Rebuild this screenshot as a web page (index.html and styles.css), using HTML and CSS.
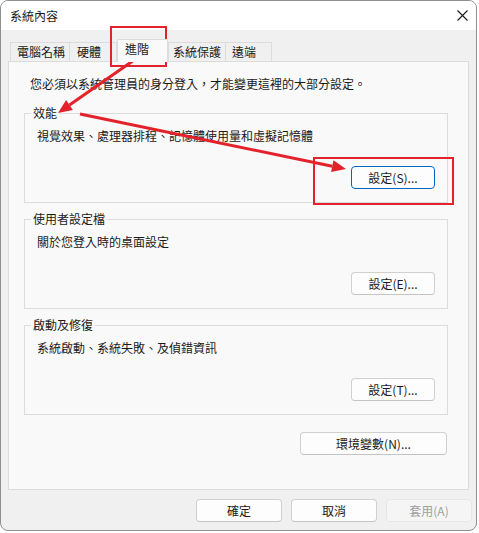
FILE: index.html
```html
<!DOCTYPE html>
<html lang="zh-TW">
<head>
    <meta charset="UTF-8">
    <title>系統內容</title>
    <link rel="stylesheet" href="styles.css">
</head>
<body>
    <div class="screen">
        <div class="window">
            <div class="titlebar">
                <span class="title">系統內容</span>
                <svg class="close" width="11" height="11" viewBox="0 0 11 11">
                    <path d="M0.5 0.5 L10.5 10.5 M10.5 0.5 L0.5 10.5" stroke="#1a1a1a" stroke-width="1.1" fill="none"/>
                </svg>
            </div>

            <div class="tabs">
                <div class="tab tab-computer">電腦名稱</div>
                <div class="tab tab-hardware">硬體</div>
                <div class="tab tab-advanced selected">進階</div>
                <div class="tab tab-protect">系統保護</div>
                <div class="tab tab-remote">遠端</div>
            </div>

            <div class="panel">
                <p class="notice">您必須以系統管理員的身分登入，才能變更這裡的大部分設定。</p>

                <fieldset class="group">
                    <legend>效能</legend>
                    <p class="desc">視覺效果、處理器排程、記憶體使用量和虛擬記憶體</p>
                    <div class="group-actions">
                        <button class="btn default">設定(S)...</button>
                    </div>
                </fieldset>

                <fieldset class="group">
                    <legend>使用者設定檔</legend>
                    <p class="desc">關於您登入時的桌面設定</p>
                    <div class="group-actions">
                        <button class="btn">設定(E)...</button>
                    </div>
                </fieldset>

                <fieldset class="group">
                    <legend>啟動及修復</legend>
                    <p class="desc">系統啟動、系統失敗、及偵錯資訊</p>
                    <div class="group-actions">
                        <button class="btn">設定(T)...</button>
                    </div>
                </fieldset>

                <div class="env-row">
                    <button class="btn wide">環境變數(N)...</button>
                </div>
            </div>

            <div class="footer">
                <button class="btn footer-btn">確定</button>
                <button class="btn footer-btn">取消</button>
                <button class="btn footer-btn" disabled>套用(A)</button>
            </div>
        </div>

        <!-- 標註 -->
        <svg class="marks" width="479" height="533" viewBox="0 0 479 533">
            <rect x="111" y="27" width="55" height="39" fill="none" stroke="#e3222b" stroke-width="2"/>
            <rect x="314" y="158" width="139" height="46" fill="none" stroke="#e3222b" stroke-width="2"/>
            <line x1="137" y1="58" x2="69.5" y2="105" stroke="#e3222b" stroke-width="3"/>
            <polygon points="58,113 72.9,109.9 66.1,100.1" fill="#e3222b"/>
            <line x1="80" y1="114" x2="332.3" y2="166.2" stroke="#e3222b" stroke-width="3"/>
            <polygon points="346,169 331.1,172.1 333.5,160.3" fill="#e3222b"/>
        </svg>
    </div>
</body>
</html>
```

FILE: styles.css
```css
:root {
  --window-bg: #f0f0f0;
  --panel-bg: #f9f9f9;
  --line: #dcdcdc;
  --text: #1a1a1a;
}

body {
  margin: 0;
  background: #ffffff;
  font-family: "Noto Sans CJK TC", "Noto Sans", sans-serif;
  font-size: 12px;
  color: var(--text);
}

.screen {
  position: relative;
  width: 479px;
  height: 533px;
}

.window {
  width: 477px;
  height: 531px;
  box-sizing: border-box;
  border: 1px solid #8f8f8f;
  border-radius: 8px;
  background: var(--window-bg);
  overflow: hidden;
}

.titlebar {
  height: 29px;
  background: #ffffff;
  display: flex;
  align-items: center;
  justify-content: space-between;
  padding: 0 8px 0 9px;
}

.title { line-height: 16px; }

/* 分頁 */
.tabs {
  height: 31px;
  display: flex;
  align-items: flex-end;
  padding-left: 9px;
}

.tab {
  box-sizing: border-box;
  height: 19px;
  line-height: 17px;
  border: 1px solid var(--line);
  border-bottom: none;
  background: #f0f0f0;
  white-space: nowrap;
}

.tab-computer { width: 60px; padding-left: 6px; }
.tab-hardware { width: 48px; padding-left: 7px; margin-left: -1px; }
.tab-advanced { width: 51px; padding-left: 7px; }
.tab-protect  { width: 58px; padding-left: 4px; }
.tab-remote   { width: 47px; padding-left: 6px; margin-left: -1px; }

.tab.selected {
  height: 23px;
  line-height: 18px;
  background: var(--panel-bg);
  margin-bottom: -1px;
  position: relative;
  z-index: 1;
}

.panel {
  box-sizing: border-box;
  height: 429px;
  margin: 0 7px;
  background: var(--panel-bg);
  border: 1px solid var(--line);
  padding: 14px 20px 0 15px;
}

.notice {
  margin: 0;
  padding-left: 6px;
  line-height: 16px;
}

.group {
  margin: 8px 0 0;
  padding: 7px 12px 13px;
  border: 1px solid var(--line);
  min-width: 0;
}

.notice + .group { margin-top: 13px; }

.group legend {
  padding: 0 2px;
  margin-left: -6px;
  line-height: 16px;
}

.desc {
  margin: 0;
  line-height: 16px;
}

.group-actions {
  display: flex;
  justify-content: flex-end;
  margin-top: 22px;
}

.btn {
  box-sizing: border-box;
  width: 84px;
  height: 23px;
  padding: 0;
  font-family: inherit;
  font-size: 12px;
  color: var(--text);
  background: #fdfdfd;
  border: 1px solid #d0d0d0;
  border-bottom-color: #c4c4c4;
  border-radius: 4px;
}

.btn.default { border-color: #0067c0; }
.btn.wide { width: 147px; }

.btn:disabled {
  color: #a0a0a0;
  background: #f5f5f5;
  border-color: #e6e6e6;
}

.env-row {
  display: flex;
  justify-content: flex-end;
  margin-top: 17px;
  padding-right: 1px;
}

.footer {
  display: flex;
  justify-content: flex-end;
  gap: 9px;
  margin-top: 9px;
  padding-right: 4px;
}

.footer-btn { width: 86px; }

.marks {
  position: absolute;
  top: 0;
  left: 0;
  pointer-events: none;
}
```
